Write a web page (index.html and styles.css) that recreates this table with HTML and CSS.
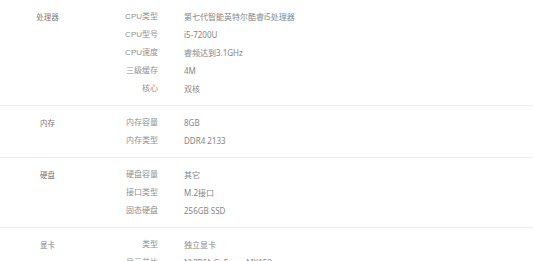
FILE: index.html
```html
<!DOCTYPE html>
<html lang="zh">
<head>
<meta charset="utf-8">
<link rel="stylesheet" href="styles.css">
</head>
<body>
<div class="specs">
  <section class="group">
    <div class="cat">处理器</div>
    <div class="rows">
      <div class="row"><span class="key">CPU类型</span><span class="val">第七代智能英特尔酷睿i5处理器</span></div>
      <div class="row"><span class="key">CPU型号</span><span class="val">i5-7200U</span></div>
      <div class="row"><span class="key">CPU速度</span><span class="val">睿频达到3.1GHz</span></div>
      <div class="row"><span class="key">三级缓存</span><span class="val">4M</span></div>
      <div class="row"><span class="key">核心</span><span class="val">双核</span></div>
    </div>
  </section>
  <section class="group">
    <div class="cat">内存</div>
    <div class="rows">
      <div class="row"><span class="key">内存容量</span><span class="val">8GB</span></div>
      <div class="row"><span class="key">内存类型</span><span class="val">DDR4 2133</span></div>
    </div>
  </section>
  <section class="group">
    <div class="cat">硬盘</div>
    <div class="rows">
      <div class="row"><span class="key">硬盘容量</span><span class="val">其它</span></div>
      <div class="row"><span class="key">接口类型</span><span class="val">M.2接口</span></div>
      <div class="row"><span class="key">固态硬盘</span><span class="val">256GB SSD</span></div>
    </div>
  </section>
  <section class="group">
    <div class="cat">显卡</div>
    <div class="rows">
      <div class="row"><span class="key">类型</span><span class="val">独立显卡</span></div>
      <div class="row"><span class="key">显示芯片</span><span class="val">NVIDIA GeForce MX150</span></div>
    </div>
  </section>
</div>
</body>
</html>
```
FILE: styles.css
```css
html, body {
  margin: 0;
  padding: 0;
  background: #fff;
}
body {
  font-family: "Noto Sans", "Noto Sans CJK SC", sans-serif;
  font-size: 7.5px;
  color: #888;
}
.group {
  display: flex;
  padding: 8px 0 7px;
  border-bottom: 1px solid #ededed;
}
.cat {
  width: 95px;
  text-align: center;
  line-height: 18px;
  color: #7a7a7a;
}
.rows {
  display: flex;
  flex-direction: column;
}
.row {
  display: flex;
  line-height: 18px;
  height: 18px;
}
.key {
  width: 63px;
  text-align: right;
  font-family: "Liberation Sans", "Noto Sans CJK SC", sans-serif;
  font-size: 8px;
  color: #929292;
}
.val {
  margin-left: 26px;
  font-size: 8px;
  color: #868686;
  white-space: nowrap;
}
```
